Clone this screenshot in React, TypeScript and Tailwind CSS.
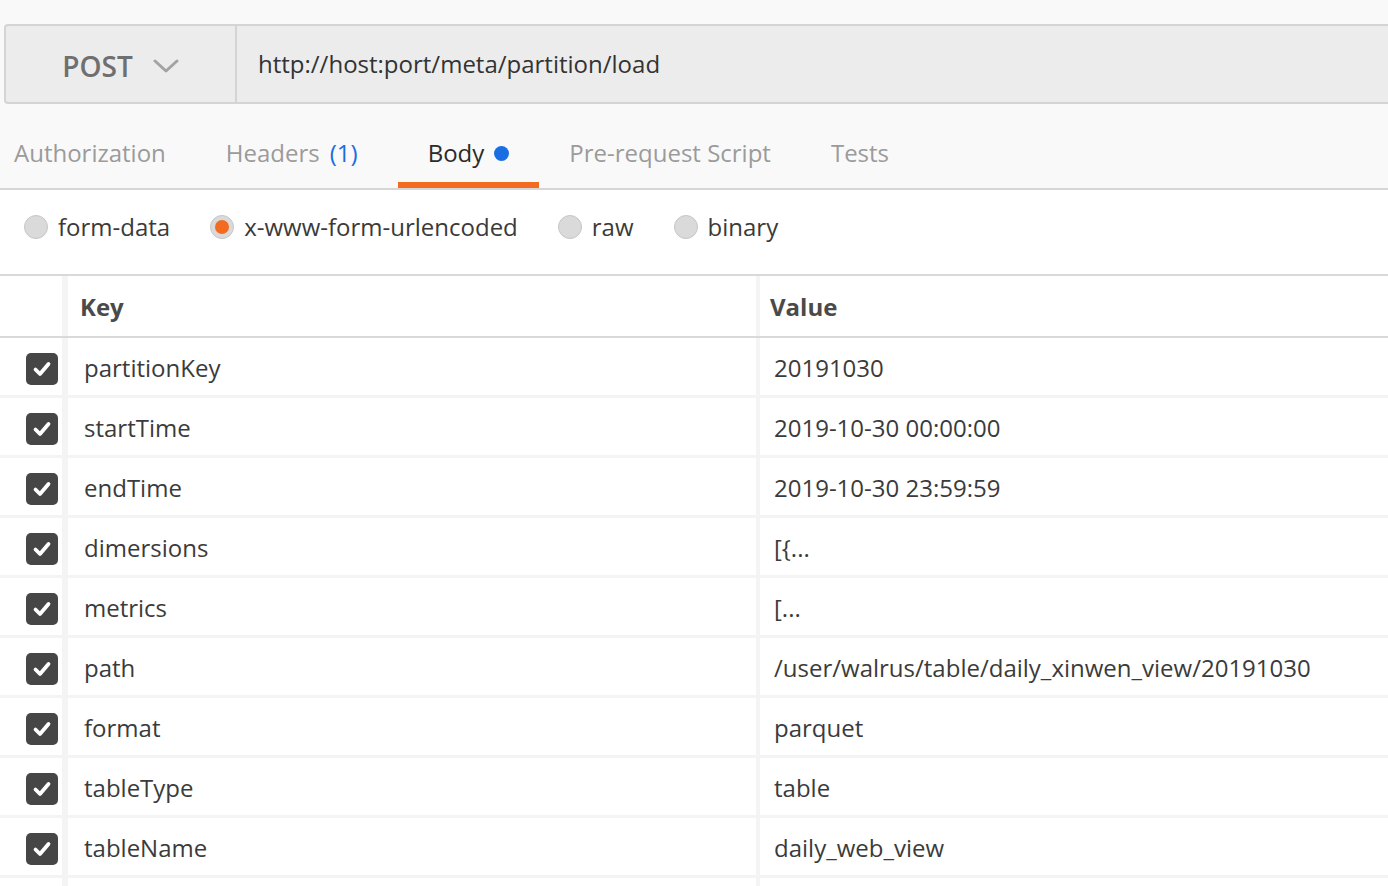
import React from 'react';

const tabs = [
  { label: 'Authorization' },
  { label: 'Headers', count: '(1)' },
  { label: 'Body', active: true },
  { label: 'Pre-request Script' },
  { label: 'Tests' },
];

const bodyTypes = [
  { label: 'form-data' },
  { label: 'x-www-form-urlencoded', selected: true },
  { label: 'raw' },
  { label: 'binary' },
];

const params = [
  ['partitionKey', '20191030'],
  ['startTime', '2019-10-30 00:00:00'],
  ['endTime', '2019-10-30 23:59:59'],
  ['dimersions', '[{...'],
  ['metrics', '[...'],
  ['path', '/user/walrus/table/daily_xinwen_view/20191030'],
  ['format', 'parquet'],
  ['tableType', 'table'],
  ['tableName', 'daily_web_view'],
  ['', ''],
];

const Checkbox = () => (
  <div className="w-[32px] h-[32px] rounded-[5px] bg-[#464646] flex items-center justify-center">
    <svg width="22" height="22" viewBox="0 0 22 22" fill="none" stroke="white" strokeWidth="3.8" strokeLinecap="round" strokeLinejoin="round">
      <polyline points="4.5 11.5 9 16 17.5 6" />
    </svg>
  </div>
);

const Radio = ({ selected }: { selected?: boolean }) => (
  <div className="w-[24px] h-[24px] rounded-full bg-[#dadada] border border-[#c6c6c6] flex items-center justify-center">
    {selected && <div className="w-[14px] h-[14px] rounded-full bg-[#f26b21]" />}
  </div>
);

export default function App() {
  return (
    <div className="w-[1388px] h-[886px] overflow-hidden bg-white text-[24px] text-[#333] font-['Open_Sans','Liberation_Sans',sans-serif]">
      <div className="bg-[#f9f9f9] pt-[24px]">
        {/* request line */}
        <div className="ml-[4px] h-[80px] flex bg-[#ececec] border-2 border-r-0 border-[#d4d4d4] rounded-l-[4px]">
          <div className="w-[231px] flex items-center justify-center gap-[20px] pt-[3px] border-r-2 border-[#d4d4d4]">
            <span className="text-[28px] font-semibold text-[#6f6f6f]">POST</span>
            <svg width="26" height="16" viewBox="0 0 26 16" fill="none" stroke="#a3a3a3" strokeWidth="3" strokeLinecap="round" strokeLinejoin="round">
              <polyline points="2 3 13 13 24 3" />
            </svg>
          </div>
          <div className="flex items-center pl-[21px] text-[#333]">http://host:port/meta/partition/load</div>
        </div>

        {/* tabs */}
        <div className="h-[86px] flex border-b-2 border-[#d6d6d6] -ml-[16px]">
          {tabs.map((t) => (
            <div
              key={t.label}
              className={`flex items-center gap-[10px] px-[30px] pt-[20px] border-b-[6px] ${t.active ? 'ml-[10px] border-[#f26b21] text-[#2b2b2b]' : 'border-transparent text-[#9b9b9b]'}`}
            >
              <span>{t.label}</span>
              {t.count && <span className="text-[#1b6de3]">{t.count}</span>}
              {t.active && <span className="w-[15px] h-[15px] rounded-full bg-[#1b6de3]" />}
            </div>
          ))}
        </div>
      </div>

      {/* body types */}
      <div className="h-[86px] flex items-center gap-[40px] pl-[24px] pb-[10px] border-b-2 border-[#d9d9d9] text-[#3a3a3a]">
        {bodyTypes.map((b) => (
          <div key={b.label} className="flex items-center gap-[10px]">
            <Radio selected={b.selected} />
            <span>{b.label}</span>
          </div>
        ))}
      </div>

      {/* table header */}
      <div className="h-[62px] flex border-b-2 border-[#d9d9d9] font-bold text-[#4a4a4a]">
        <div className="w-[62px]" />
        <div className="w-[6px] bg-[#f4f4f4]" />
        <div className="w-[688px] flex items-center pl-[12px] pt-[1px]">Key</div>
        <div className="w-[4px] bg-[#f4f4f4]" />
        <div className="flex-1 flex items-center pl-[10px] pt-[1px]">Value</div>
      </div>

      {/* rows */}
      {params.map(([k, v], i) => (
        <div key={i} className="h-[60px] flex border-b-[3px] border-[#f4f4f4] text-[#3b3b3b]">
          <div className="w-[62px] flex items-center justify-end pr-[4px] pt-[4px]">{k && <Checkbox />}</div>
          <div className="w-[6px] bg-[#f4f4f4]" />
          <div className="w-[688px] flex items-center pl-[16px] pt-[3px]">{k}</div>
          <div className="w-[4px] bg-[#f4f4f4]" />
          <div className="flex-1 flex items-center pl-[14px] pt-[3px]">{v}</div>
        </div>
      ))}
    </div>
  );
}
